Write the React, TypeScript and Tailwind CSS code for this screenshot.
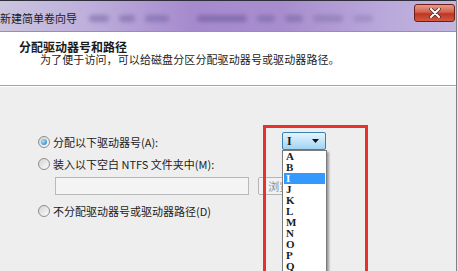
import React from "react";

const letters = ["A", "B", "I", "J", "K", "L", "M", "N", "O", "P", "Q"];

function Radio({ checked }: { checked?: boolean }) {
  return (
    <span className="w-[12px] h-[12px] rounded-full border border-[#8b8d8f] bg-[linear-gradient(135deg,#d4d4d4,#fbfbfb)] flex items-center justify-center shrink-0">
      {checked && (
        <span className="w-[6px] h-[6px] rounded-full bg-[radial-gradient(circle_at_35%_35%,#a8e4ff,#1d6fb8)]" />
      )}
    </span>
  );
}

export default function App() {
  return (
    <div className="w-[458px] h-[271px] overflow-hidden relative bg-[#e6e4ee] font-['Noto_Sans_CJK_SC',sans-serif] text-[#1b1b1b]">
      <div className="w-[457px] h-full flex flex-col border-r border-r-[#80808a]">
        {/* title bar */}
        <div className="h-[32px] shrink-0 flex items-start justify-between border-t border-t-[#2e2d3a] border-b border-b-[#9491a8] bg-[linear-gradient(90deg,#cbc5df_0%,#bdaedb_20%,#a68ace_42%,#a88dce_62%,#b8a6da_82%,#c2b6df_100%)]">
          <div className="flex items-center pt-[10px]">
            <span className="text-[11px] leading-[14px] text-[#1a1a1a]">新建简单卷向导</span>
            <div className="flex items-center gap-[10px] ml-[12px] opacity-60">
              <span className="w-[20px] h-[7px] rounded bg-[#7a68a6] blur-[2px]" />
              <span className="w-[16px] h-[7px] rounded bg-[#7a68a6] blur-[2px]" />
              <span className="w-[24px] h-[7px] rounded bg-[#7a68a6] blur-[2px]" />
              <span className="w-[50px] h-[7px] rounded bg-[#6f5c9c] blur-[2px] ml-[18px]" />
              <span className="w-[18px] h-[7px] rounded bg-[#7a68a6] blur-[2px]" />
              <span className="w-[18px] h-[7px] rounded bg-[#7a68a6] blur-[2px]" />
              <span className="w-[30px] h-[7px] rounded bg-[#8877ad] blur-[2px]" />
              <span className="w-[20px] h-[7px] rounded bg-[#9584b8] blur-[2px]" />
            </div>
          </div>
          <div className="mt-[3px] mr-[1px] w-[41px] h-[18px] rounded-[3px] border border-[#6b1e17] bg-[linear-gradient(180deg,#e99a88_0%,#d2614c_45%,#bf3522_55%,#d05a40_100%)] flex items-center justify-center">
            <svg width="12" height="10" viewBox="0 0 12 10">
              <path d="M2 1 L10 9 M10 1 L2 9" stroke="#4a2420" strokeWidth="3.4" strokeLinecap="round" />
              <path d="M2 1 L10 9 M10 1 L2 9" stroke="#ffffff" strokeWidth="2" strokeLinecap="round" />
            </svg>
          </div>
        </div>

        {/* header */}
        <div className="h-[54px] shrink-0 bg-white border-b border-b-[#a3a3a3] pt-[8px] pl-[19px]">
          <div className="text-[12px] leading-[13px] font-bold">分配驱动器号和路径</div>
          <div className="text-[11px] leading-[12px] pl-[21px] tracking-[0.1px]">
            为了便于访问，可以给磁盘分区分配驱动器号或驱动器路径。
          </div>
        </div>

        {/* body */}
        <div className="flex-1 bg-[#eeeeee] border-t border-t-white pl-[38px] pt-[45px] text-[11px]">
          <div className="flex items-center h-[18px]">
            <span className="flex items-center translate-y-[1px]">
              <Radio checked />
              <span className="ml-[3px] w-[229px] leading-[14px]">分配以下驱动器号(A):</span>
            </span>
            <div className="relative">
              <div className="w-[44px] h-[18px] rounded-[2px] border border-[#3c7fb1] bg-[linear-gradient(180deg,#e4f3fd_0%,#c4e5f9_50%,#9fd3f3_100%)] flex items-center justify-between pl-[4px] pr-[6px]">
                <span className="font-['Liberation_Serif',serif] font-bold text-[12px] leading-[11px]">I</span>
                <svg width="7" height="4" viewBox="0 0 7 4">
                  <path d="M0 0 H7 L3.5 4 Z" fill="#111" />
                </svg>
              </div>
              <div className="absolute left-0 top-[18px] w-[45px] h-[140px] bg-white border border-[#7b7b7b] shadow-[2px_2px_2px_rgba(0,0,0,0.35)] z-10">
                {letters.map((l) => (
                  <div
                    key={l}
                    className={
                      l === "I"
                        ? "h-[11px] mx-[1px] pl-[2px] bg-[#3399ff] text-white font-['Liberation_Serif',serif] font-bold text-[11px] leading-[11px]"
                        : "h-[11px] mx-[1px] pl-[2px] font-['Liberation_Serif',serif] font-bold text-[11px] leading-[11px]"
                    }
                  >
                    {l}
                  </div>
                ))}
              </div>
            </div>
          </div>

          <div className="flex items-center h-[16px] mt-[6px]">
            <Radio />
            <span className="ml-[3px] leading-[14px]">装入以下空白 NTFS 文件夹中(M):</span>
          </div>

          <div className="flex items-center mt-[5px] ml-[17px]">
            <div className="w-[194px] h-[18px] border border-[#b9b9b9] bg-[#f4f4f4]" />
            <div className="ml-[9px] w-[66px] h-[18px] rounded-[2px] border border-[#b5b5b5] bg-[#f2f2f2] flex items-center justify-center text-[#8d8d8d] leading-[12px]">
              浏览(R)...
            </div>
          </div>

          <div className="flex items-center h-[16px] mt-[8px]">
            <Radio />
            <span className="ml-[3px] leading-[14px]">不分配驱动器号或驱动器路径(D)</span>
          </div>
        </div>
      </div>

      {/* red annotation box */}
      <div className="absolute left-[263px] top-[125px] w-[105px] h-[160px] border-[3px] border-[#e5322d] z-20" />
    </div>
  );
}
